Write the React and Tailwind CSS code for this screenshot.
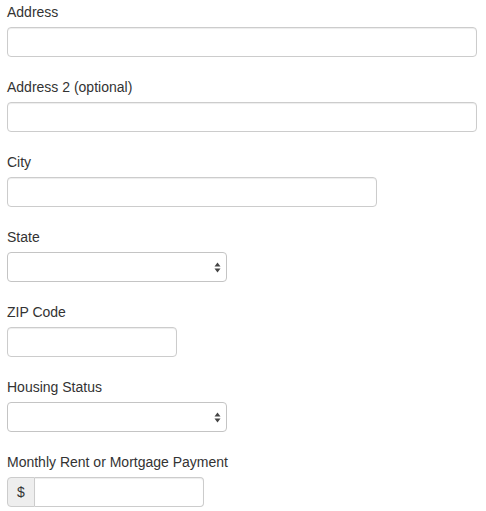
import React from "react";

const inputCls =
  "block h-[30px] rounded-[4px] border border-[#cccccc] bg-white px-3 text-[14px] text-[#555] shadow-[inset_0_1px_1px_rgba(0,0,0,0.075)] outline-none";

function Label({ children }) {
  return <label className="mb-[5px] block text-[14px] leading-[20px] text-[#333]">{children}</label>;
}

function Select({ width }) {
  return (
    <div className={`relative ${width} h-[30px]`}>
      <div className="h-full w-full rounded-[4px] border border-[#c4c4c4] bg-white" />
      <svg className="absolute right-[6px] top-[10px]" width="7" height="11" viewBox="0 0 7 11">
        <path d="M3.5 0.5 L6.5 4.5 L0.5 4.5 Z" fill="#444" />
        <path d="M0.5 6.5 L6.5 6.5 L3.5 10.5 Z" fill="#444" />
      </svg>
    </div>
  );
}

export default function App() {
  return (
    <div className="bg-white pl-[7px] pt-[2px] font-['Liberation_Sans',Arial,sans-serif] text-[#333]">
      <div className="mb-[20px]">
        <Label>Address</Label>
        <input className={`${inputCls} w-[470px]`} />
      </div>
      <div className="mb-[20px]">
        <Label>Address 2 (optional)</Label>
        <input className={`${inputCls} w-[470px]`} />
      </div>
      <div className="mb-[20px]">
        <Label>City</Label>
        <input className={`${inputCls} w-[370px]`} />
      </div>
      <div className="mb-[20px]">
        <Label>State</Label>
        <Select width="w-[220px]" />
      </div>
      <div className="mb-[20px]">
        <Label>ZIP Code</Label>
        <input className={`${inputCls} w-[170px]`} />
      </div>
      <div className="mb-[20px]">
        <Label>Housing Status</Label>
        <Select width="w-[220px]" />
      </div>
      <div className="mb-[4px]">
        <Label>Monthly Rent or Mortgage Payment</Label>
        <div className="flex h-[30px] w-[197px]">
          <span className="flex w-[28px] items-center justify-center rounded-l-[4px] border border-[#cccccc] bg-[#eeeeee] text-[14px] text-[#333]">
            $
          </span>
          <input className="h-[30px] min-w-0 flex-1 rounded-r-[4px] border border-l-0 border-[#cccccc] bg-white px-3 shadow-[inset_0_1px_1px_rgba(0,0,0,0.075)] outline-none" />
        </div>
      </div>
    </div>
  );
}
